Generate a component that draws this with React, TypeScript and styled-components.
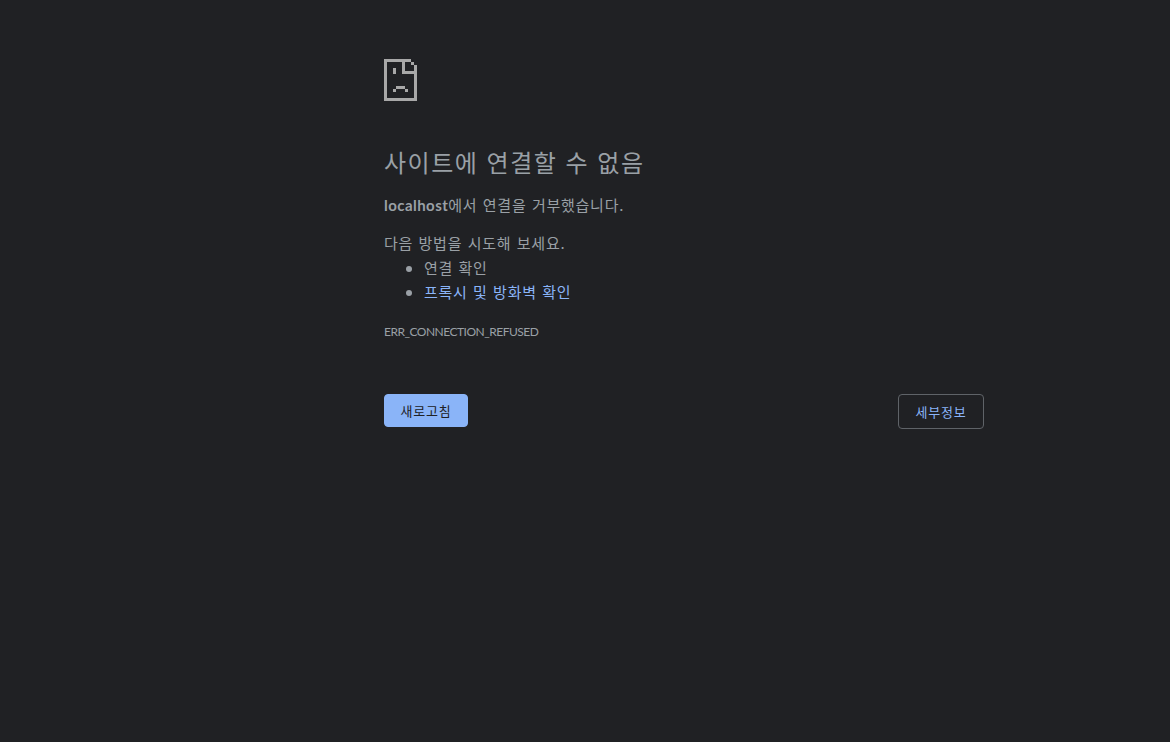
import React from "react";
import styled, { createGlobalStyle } from "styled-components";

const Global = createGlobalStyle`
  html, body { margin: 0; padding: 0; height: 100%; background: #202124; }
  body {
    color: #9aa0a6;
    font-family: "Noto Sans CJK KR", sans-serif;
    font-size: 15px;
    line-height: 24px;
    letter-spacing: 0.05em;
    word-spacing: 0.09em;
  }
`;

const Page = styled.div`
  box-sizing: border-box;
  min-height: 742px;
  padding: 59px 0 0 384px;
`;

const Content = styled.main`
  width: 600px;
`;

const Icon = styled.svg`
  display: block;
  width: 33px;
  height: 42px;
  margin-bottom: 43px;
`;

const Heading = styled.h1`
  margin: 0 0 13px;
  font-size: 24px;
  font-weight: 400;
  line-height: 36px;
  letter-spacing: 1.5px;
`;

const Paragraph = styled.p`
  margin: 0 0 14px;
  font-size: 15px;
  line-height: 24px;
`;

const Host = styled.strong`
  font-family: "Lato", sans-serif;
  font-weight: 700;
  letter-spacing: 0.45px;
`;

const Suggestions = styled.div`
  font-size: 15px;
  line-height: 24px;
`;

const List = styled.ul`
  margin: 1px 0 0;
  padding-left: 40px;
`;

const Link = styled.a`
  color: #8ab4f8;
  text-decoration: none;
`;

const Code = styled.div`
  margin-top: 19px;
  font-family: "Lato", sans-serif;
  font-size: 12px;
  line-height: 18px;
  letter-spacing: -0.5px;
`;

const Actions = styled.div`
  display: flex;
  justify-content: space-between;
  align-items: flex-start;
  margin-top: 53px;
`;

const Button = styled.button<{ $primary?: boolean }>`
  height: ${(p) => (p.$primary ? "33px" : "35px")};
  width: ${(p) => (p.$primary ? "84px" : "86px")};
  padding: 0;
  border-radius: 4px;
  box-sizing: border-box;
  border: 1px solid ${(p) => (p.$primary ? "#8ab4f8" : "#5f6368")};
  background: ${(p) => (p.$primary ? "#8ab4f8" : "#202124")};
  color: ${(p) => (p.$primary ? "#202124" : "#8ab4f8")};
  font: 400 13px "Noto Sans CJK KR", sans-serif;
  letter-spacing: 0.06em;
`;

const SadPage = () => (
  <Icon viewBox="0 0 33 42" shapeRendering="crispEdges" aria-hidden="true">
    <path
      fill="#a8a8a8"
      d="M0 0H27V3H0ZM0 0H3V42H0ZM0 39H33V42H0ZM30 6H33V42H30ZM27 3H30V6H27ZM18 3H21V15H18ZM18 12H30V15H18ZM9 9H12V15H9ZM12 27H21V30H12ZM9 30H12V33H9ZM21 30H24V33H21Z"
    />
  </Icon>
);

export default function App() {
  return (
    <Page>
      <Global />
      <Content>
        <SadPage />
        <Heading>사이트에 연결할 수 없음</Heading>
        <Paragraph>
          <Host>localhost</Host>에서 연결을 거부했습니다.
        </Paragraph>
        <Suggestions>
          다음 방법을 시도해 보세요.
          <List>
            <li>연결 확인</li>
            <li>
              <Link href="#">프록시 및 방화벽 확인</Link>
            </li>
          </List>
        </Suggestions>
        <Code>ERR_CONNECTION_REFUSED</Code>
        <Actions>
          <Button $primary>새로고침</Button>
          <Button>세부정보</Button>
        </Actions>
      </Content>
    </Page>
  );
}
